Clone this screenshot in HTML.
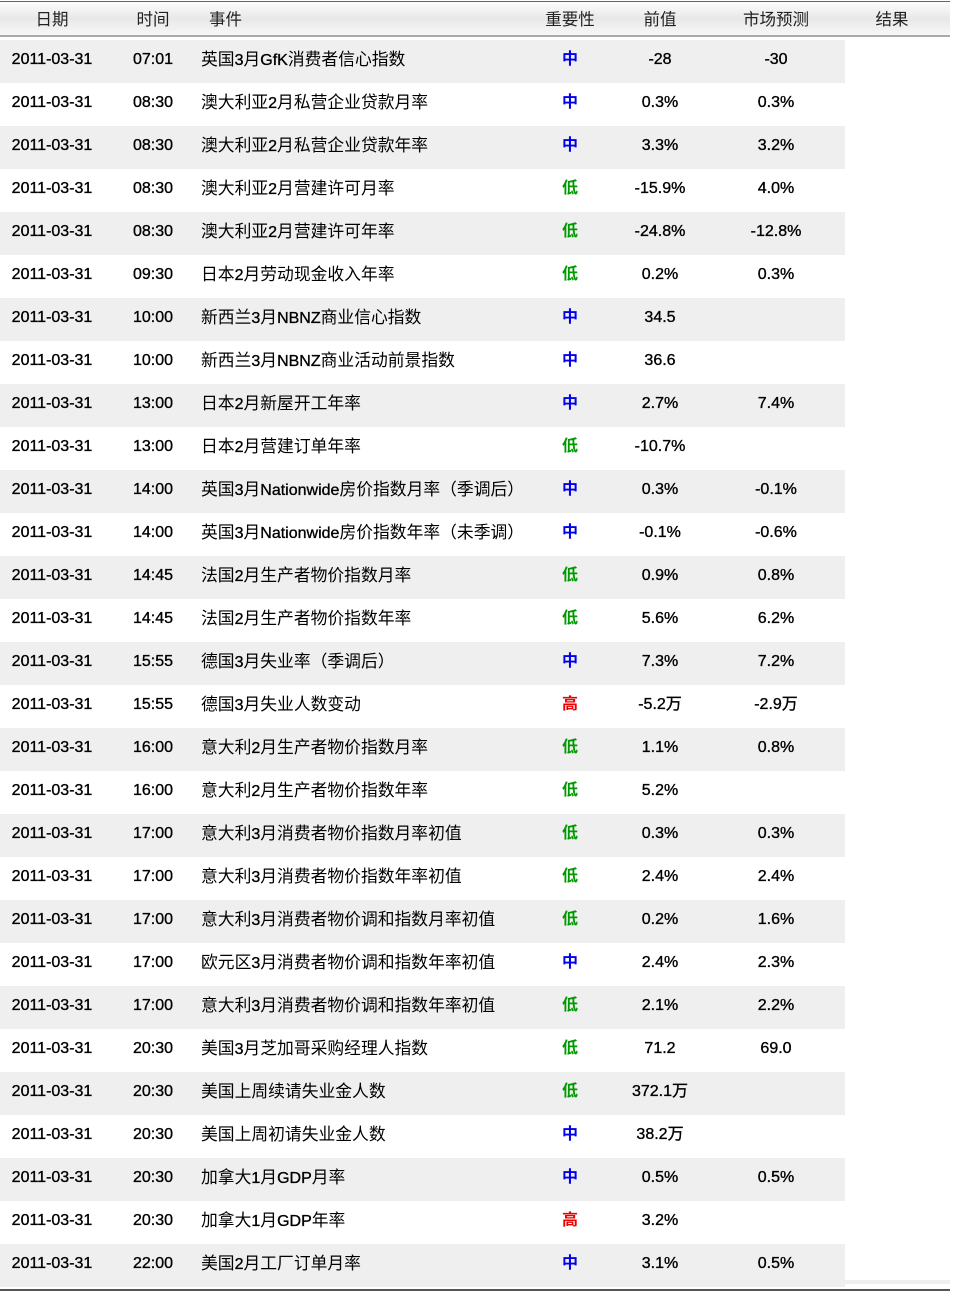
<!DOCTYPE html>
<html><head><meta charset="utf-8"><style>
body{margin:0;background:#fff;width:959px;height:1296px;overflow:hidden;font-family:"Liberation Sans","Noto Sans CJK SC",sans-serif;}
.hd{position:absolute;left:0;top:1px;width:950px;height:33px;background:linear-gradient(#fdfdfd,#e8e8e8 50%,#f7f7f7);border-top:1px solid #666;border-bottom:2px solid #aaa;}
.hd span{position:absolute;top:1px;line-height:34px;font-size:16.5px;color:#222;transform:translateX(-50%);}
.row{position:absolute;left:0;width:845px;height:43px;font-size:16px;color:#000;}
.row.g{background:#efefef;}
.row span{position:absolute;top:-2px;line-height:43px;transform:translateX(-50%);-webkit-text-stroke:0.35px #000;}
.c1{left:52px}.c2{left:153px}.c4{left:570px;font-weight:bold}.c5{left:660px}.c6{left:776px}
.row .c3{left:201px;transform:none;-webkit-text-stroke:0;font-size:16.8px;}
.row .c3 b{font-weight:normal;font-size:16px;-webkit-text-stroke:0.35px #000;}
.row .m{color:#0000ee;-webkit-text-stroke:0}.row .l{color:#009900;-webkit-text-stroke:0}.row .h{color:#ee0000;-webkit-text-stroke:0}
</style></head><body>
<div class="hd"><span style="left:52px">日期</span><span style="left:153px">时间</span><span style="left:209px;transform:none">事件</span><span style="left:570px">重要性</span><span style="left:660px">前值</span><span style="left:776px">市场预测</span><span style="left:892px">结果</span></div>
<div id="t"></div>
<div style="position:absolute;left:0;top:1280px;width:950px;height:4px;background:#efefef"></div>
<div style="position:absolute;left:0;top:1289px;width:950px;height:2px;background:#555"></div>
<script>
var d=[["07:01","英国3月GfK消费者信心指数","m","-28","-30"],
["08:30","澳大利亚2月私营企业贷款月率","m","0.3%","0.3%"],
["08:30","澳大利亚2月私营企业贷款年率","m","3.3%","3.2%"],
["08:30","澳大利亚2月营建许可月率","l","-15.9%","4.0%"],
["08:30","澳大利亚2月营建许可年率","l","-24.8%","-12.8%"],
["09:30","日本2月劳动现金收入年率","l","0.2%","0.3%"],
["10:00","新西兰3月NBNZ商业信心指数","m","34.5",""],
["10:00","新西兰3月NBNZ商业活动前景指数","m","36.6",""],
["13:00","日本2月新屋开工年率","m","2.7%","7.4%"],
["13:00","日本2月营建订单年率","l","-10.7%",""],
["14:00","英国3月Nationwide房价指数月率（季调后）","m","0.3%","-0.1%"],
["14:00","英国3月Nationwide房价指数年率（未季调）","m","-0.1%","-0.6%"],
["14:45","法国2月生产者物价指数月率","l","0.9%","0.8%"],
["14:45","法国2月生产者物价指数年率","l","5.6%","6.2%"],
["15:55","德国3月失业率（季调后）","m","7.3%","7.2%"],
["15:55","德国3月失业人数变动","h","-5.2万","-2.9万"],
["16:00","意大利2月生产者物价指数月率","l","1.1%","0.8%"],
["16:00","意大利2月生产者物价指数年率","l","5.2%",""],
["17:00","意大利3月消费者物价指数月率初值","l","0.3%","0.3%"],
["17:00","意大利3月消费者物价指数年率初值","l","2.4%","2.4%"],
["17:00","意大利3月消费者物价调和指数月率初值","l","0.2%","1.6%"],
["17:00","欧元区3月消费者物价调和指数年率初值","m","2.4%","2.3%"],
["17:00","意大利3月消费者物价调和指数年率初值","l","2.1%","2.2%"],
["20:30","美国3月芝加哥采购经理人指数","l","71.2","69.0"],
["20:30","美国上周续请失业金人数","l","372.1万",""],
["20:30","美国上周初请失业金人数","m","38.2万",""],
["20:30","加拿大1月GDP月率","m","0.5%","0.5%"],
["20:30","加拿大1月GDP年率","h","3.2%",""],
["22:00","美国2月工厂订单月率","m","3.1%","0.5%"]];
var L={m:"中",l:"低",h:"高"},h="";
function ev(s){return s.replace(/([A-Za-z0-9]+)/g,'<b>$1</b>');}
d.forEach(function(r,i){h+='<div class="row'+(i%2?'':' g')+'" style="top:'+(40+i*43)+'px"><span class="c1">2011-03-31</span><span class="c2">'+r[0]+'</span><span class="c3">'+ev(r[1])+'</span><span class="c4 '+r[2]+'">'+L[r[2]]+'</span><span class="c5">'+r[3]+'</span><span class="c6">'+r[4]+'</span></div>';});
document.getElementById("t").innerHTML=h;
</script>
</body></html>
